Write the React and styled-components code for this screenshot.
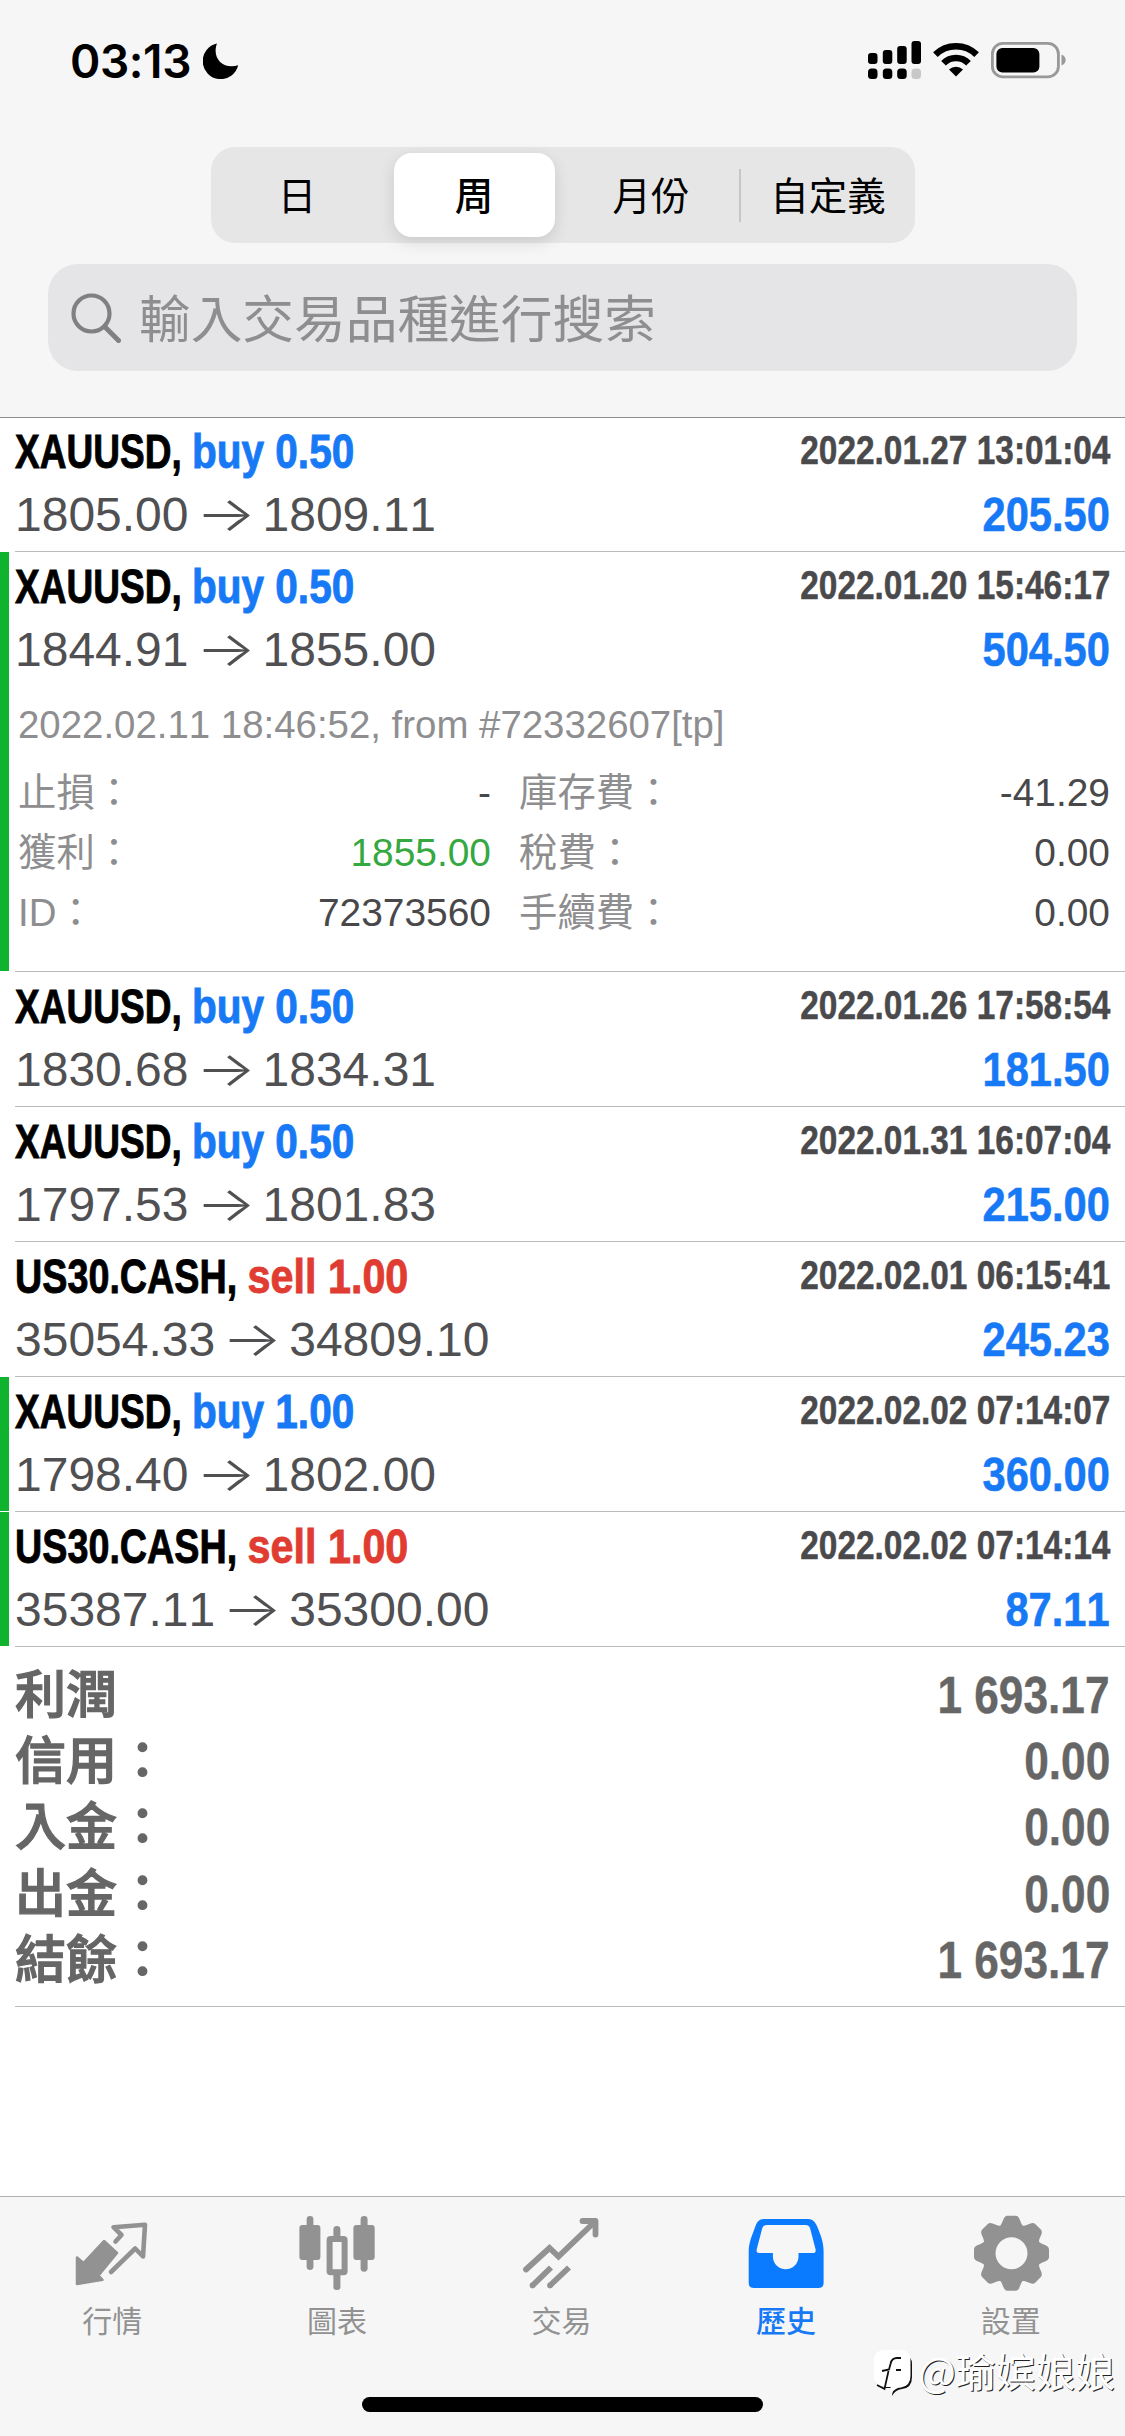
import React from 'react'
import styled, {createGlobalStyle} from 'styled-components'

const sans = '"Liberation Sans", "Noto Sans CJK TC", sans-serif'
const cjk = '"Noto Sans CJK TC", sans-serif'
const inter = 'Inter, "Noto Sans CJK TC", sans-serif'

const GlobalStyle = createGlobalStyle`
    * {
        box-sizing: border-box;
    }
    body {
        margin: 0;
        background: #fff;
    }
`
const Screen = styled.div`
    display: flex;
    flex-direction: column;
    width: 1125px;
    height: 2436px;
    overflow: hidden;
    background: #fff;
    font-family: ${sans};
`
const Header = styled.header`
    position: relative;
    z-index: 1;
    display: flex;
    flex-direction: column;
    align-items: center;
    height: 418px;
    flex: none;
    margin-bottom: -1px;
    background: #f6f6f6;
    border-bottom: 1px solid #8e8e8e;
`
const StatusBar = styled.div`
    display: flex;
    justify-content: space-between;
    width: 100%;
    height: 147px;
    padding: 38px 59px 0 70px;
`
const Clock = styled.div`
    display: flex;
    gap: 12px;
    align-items: flex-start;
    font: 600 46px/46px ${inter};
    letter-spacing: -.4px;
    color: #000;
    svg {
        margin-top: 5px;
    }
`
const StatusIcons = styled.div`
    display: flex;
    gap: 12px;
    align-items: flex-start;
    margin-top: 3px;
`
const Segments = styled.div`
    display: flex;
    flex: none;
    align-items: center;
    justify-content: center;
    width: 704px;
    height: 96px;
    border-radius: 24px;
    background: #e6e6e6;
`
const Segment = styled.div`
    display: flex;
    align-items: center;
    justify-content: center;
    flex: none;
    width: ${props => props.$active ? 161 : 177}px;
    height: 84px;
    margin: 0 ${props => props.$active ? 8 : 0}px;
    padding-bottom: 5px;
    border-radius: 18px;
    font: ${props => props.$active ? 500 : 400} 38.5px/50px ${cjk};
    color: #000;
    background: ${props => props.$active ? '#fff' : 'transparent'};
    box-shadow: ${props => props.$active ? '0 5px 16px rgba(0,0,0,.12)' : 'none'};
`
const Divider = styled.i`
    flex: none;
    width: 2px;
    height: 53px;
    margin: 0 -1px;
    background: #c6c6c8;
`
const SearchField = styled.div`
    display: flex;
    flex: none;
    align-items: center;
    width: 1029px;
    height: 107px;
    margin-top: 21px;
    padding: 0 0 4px 23px;
    border-radius: 30px;
    background: #e5e5e7;
    gap: 18px;
    font: 400 51.7px/60px ${cjk};
    color: #8e8e90;
    svg {
        margin-top: 4px;
    }
`
const Row = styled.article`
    position: relative;
    flex: none;
    height: ${props => props.$open ? 420 : 135}px;
    padding: 6px 15px 0;
    &::after {
        content: '';
        position: absolute;
        left: 15px;
        right: 0;
        bottom: 0;
        height: 1px;
        background: #bbb;
    }
    &::before {
        content: '';
        position: absolute;
        display: ${props => props.$marked ? 'block' : 'none'};
        left: 0;
        top: 0;
        bottom: 1px;
        width: 9px;
        background: #0fb32e;
    }
`
const Line = styled.div`
    display: flex;
    justify-content: space-between;
    align-items: flex-start;
    height: 63px;
    white-space: nowrap;
`
// the bold labels are squeezed to a condensed cut, the stroke keeps them heavy
const Symbol = styled.span`
    font: 700 49px/56px ${sans};
    color: #000;
    transform: scaleX(${props => props.$long ? .77 : .756});
    transform-origin: left;
    -webkit-text-stroke: .9px;
`
const Side = styled.span`
    display: inline-block;
    color: ${props => props.$sell ? '#e03c31' : '#1779f5'};
    transform: scaleX(1.095);
    transform-origin: left;
`
const Time = styled.span`
    font: 700 40px/54px ${sans};
    color: #4a4a4d;
    transform: scaleX(.835);
    transform-origin: right;
    -webkit-text-stroke: .5px;
`
const Price = styled.span`
    font: 400 48px/58px ${sans};
    font-kerning: none;
    color: #505052;
`
const Arrow = styled.span`
    display: inline-flex;
    justify-content: center;
    width: 46px;
    margin: 0 14px;
    font: 300 48px/48px ${inter};
    transform: scaleX(1.32);
`
const Profit = styled.span`
    font: 700 49px/56px ${sans};
    font-kerning: none;
    color: #1779f5;
    transform: scaleX(.85);
    transform-origin: right;
    -webkit-text-stroke: .6px;
`
const Comment = styled.p`
    margin: 18px 0 0 3px;
    font: 400 38.4px/46px ${sans};
    font-kerning: none;
    color: #8e8e90;
`
const Details = styled.dl`
    display: grid;
    grid-template-columns: 473px 1fr;
    column-gap: 28px;
    margin: 15px 0 0 3px;
`
const Detail = styled.div`
    display: flex;
    justify-content: space-between;
    align-items: baseline;
    height: 60px;
    font: 400 38.4px/60px ${sans};
    dt {
        color: #8e8e90;
    }
    dd {
        margin: 0;
        font-size: 38.9px;
        color: ${props => props.$green ? '#35a83f' : '#48484a'};
    }
`
const Summary = styled.section`
    position: relative;
    flex: none;
    height: 360px;
    padding: 16px 15px 0;
    &::after {
        content: '';
        position: absolute;
        left: 15px;
        right: 0;
        bottom: 0;
        height: 1px;
        background: #bbb;
    }
`
const Total = styled.div`
    display: flex;
    justify-content: space-between;
    align-items: baseline;
    height: 66.2px;
    font: 500 51px/66px ${sans};
    color: #666;
    -webkit-text-stroke: 1.3px;
`
const Amount = styled.span`
    font-weight: 700;
    transform: scaleX(.867);
    transform-origin: right;
    -webkit-text-stroke: .4px;
`
const TabBar = styled.nav`
    position: relative;
    display: flex;
    height: 240px;
    flex: none;
    margin-top: auto;
    padding-right: 2px;
    background: #f6f6f6;
    border-top: 1px solid #b2b2b2;
`
const Tab = styled.div`
    display: flex;
    flex-direction: column;
    align-items: center;
    flex: 1;
    padding-top: 17px;
    font: ${props => props.$active ? 500 : 400} 30px/40px ${cjk};
    color: ${props => props.$active ? '#1779f5' : '#929292'};
    svg {
        display: block;
        margin: 0 0 5px 2px;
    }
`
const HomeIndicator = styled.i`
    position: absolute;
    left: 362px;
    bottom: 24px;
    width: 401px;
    height: 15px;
    border-radius: 8px;
    background: #000;
`
const Watermark = styled.div`
    position: absolute;
    right: 10px;
    bottom: 38px;
    display: flex;
    align-items: flex-start;
    gap: 4px;
    font: 400 39.8px/50px "Noto Sans CJK SC", sans-serif;
    color: #fff;
    text-shadow: 1px 1px 0 #222;
    svg {
        margin-top: 5px;
    }
`

const Moon = () => (
    <svg width="36" height="36" viewBox="0 0 36 36">
        <path d="M14 .5A18 18 0 1 0 35.2 22.3C20 27 8.5 15 14 .5Z"/>
    </svg>
)

const Signal = () => (
    <svg width="53" height="38" viewBox="0 0 53 38">
        <rect x="0" y="12" width="9.5" height="11" rx="3"/>
        <rect x="14.8" y="9" width="9.5" height="14" rx="3"/>
        <rect x="29.2" y="5" width="9.5" height="18" rx="3"/>
        <rect x="43.5" y="0" width="9.5" height="23" rx="3"/>
        <rect x="0" y="27.5" width="9.5" height="10.5" rx="3.5"/>
        <rect x="14.8" y="27.5" width="9.5" height="10.5" rx="3.5"/>
        <rect x="29.2" y="27.5" width="9.5" height="10.5" rx="3.5"/>
        <rect x="43.5" y="27.5" width="9.5" height="10.5" rx="3.5" fill="#c8c8c8"/>
    </svg>
)

const Wifi = () => (
    <svg width="46" height="38" viewBox="0 0 46 38">
        <g fill="none" stroke="#000" strokeWidth="6.6">
            <path d="M2.4 13.6A29.5 29.5 0 0 1 43.6 13.6"/>
            <path d="M10.5 22.2A17.6 17.6 0 0 1 35.5 22.2"/>
        </g>
        <path d="M23 35.6L16 28.6A10 10 0 0 1 30 28.6Z"/>
    </svg>
)

const Battery = () => (
    <svg width="75" height="38" viewBox="0 0 75 38">
        <rect x="1.4" y="2.4" width="66" height="33.5" rx="10.5" fill="none" stroke="#999" strokeWidth="2.8"/>
        <rect x="5.4" y="7" width="43" height="24.5" rx="6"/>
        <path d="M70.5 13.5C76 15.5 76 22.5 70.5 24.5Z" fill="#999"/>
    </svg>
)

const SearchIcon = () => (
    <svg width="50" height="50" viewBox="0 0 50 50" fill="none" stroke="#808082" strokeWidth="4.2">
        <circle cx="20.5" cy="20.5" r="18"/>
        <path d="M33.5 33.5L47.5 47.5" strokeWidth="5" strokeLinecap="round"/>
    </svg>
)

const QuotesIcon = () => (
    <svg width="84" height="80" viewBox="0 0 84 80">
        <path d="M33 27L46 39L27.5 61.5L31.5 65.8L6 70V43.5L12.5 49Z" fill="#929292" stroke="#929292" strokeWidth="2.5" strokeLinejoin="round"/>
        <path d="M44.5 27.5L50.5 21L42.5 13.2L74 10.8L72 42.5L64.2 34.5L40 58" fill="none" stroke="#929292" strokeWidth="4.6" strokeLinejoin="round" strokeLinecap="round"/>
    </svg>
)

const ChartIcon = () => (
    <svg width="84" height="80" viewBox="0 0 84 80" fill="#929292">
        <rect x="10.6" y="2" width="6.8" height="54" rx="3.4"/>
        <rect x="3.4" y="11" width="21" height="35" rx="3"/>
        <rect x="64.6" y="2" width="7" height="55.7" rx="3.4"/>
        <rect x="57.4" y="11" width="21.3" height="35" rx="3"/>
        <rect x="37.4" y="12" width="7" height="14" rx="3.4"/>
        <rect x="37.4" y="58" width="7" height="18" rx="3"/>
        <rect x="33.6" y="25" width="15" height="33.3" rx="1" fill="none" stroke="#929292" strokeWidth="6"/>
    </svg>
)

const TradeIcon = () => (
    <svg width="84" height="80" viewBox="0 0 84 80" fill="none" stroke="#929292" strokeWidth="5.8">
        <path d="M6 55.5L29.5 34L38.5 42.5L75 7.5" strokeLinecap="round"/>
        <path d="M62.5 7H75.5V20.5" strokeLinecap="round" strokeLinejoin="round"/>
        <path d="M12.5 71.5L13 71L31 53.5M30 71.5L30.5 71L49 53.5"/>
        <path d="M12.5 71.4V71.5M30 71.4V71.5" strokeLinecap="round"/>
    </svg>
)

const HistoryIcon = () => (
    <svg width="84" height="80" viewBox="0 0 84 80">
        <path
            fill="#0a7aff"
            fillRule="evenodd"
            d="M19 5H63C68 5 70 8 72 12C76 22 78.6 28 78.6 38V69Q78.6 74 73.6 74H8.7Q3.7 74 3.7 69V38C3.7 28 7 22 10.5 12C12 8 14 5 19 5ZM22 11C19.5 11 18 12 17.3 14L11.8 35C11.2 38 11.8 39 14.5 39H27.9V42.5A12.8 12.8 0 0 0 53.5 42.5V39H67.5C70.5 39 71 38 70.5 35L65 14C64.2 12 63 11 60.5 11Z"
        />
    </svg>
)

const SettingsIcon = () => (
    <svg width="84" height="80" viewBox="0 0 84 80">
        <g transform="translate(41.5 39.3)" fill="#929292">
            {[0, 45, 90, 135, 180, 225, 270, 315].map(angle => (
                <path key={angle} transform={`rotate(${angle})`} d="M-13 -26C-8 -29 -9 -37.5 -4 -37.5H4C9 -37.5 8 -29 13 -26Z"/>
            ))}
            <circle r="22.8" fill="none" stroke="#929292" strokeWidth="13.6"/>
        </g>
    </svg>
)

const WatermarkLogo = () => (
    <svg width="40" height="48" viewBox="0 0 40 48">
        <path d="M36 8Q38 10 38 14V27Q38 38 28 39Q21 40 18 46L19 38L12 38Q3 36 1 31" fill="#111"/>
        <path d="M11 0H26Q36.5 0 36.5 11V26Q36.5 36 27 37.5Q20 38 17.5 44L16.5 37H11Q0 37 0 26V11Q0 0 11 0Z" fill="#fff"/>
        <path d="M27 8H23Q17.5 8 16.5 14L15 19.5L8 21M14.5 21L10.5 39L3 35M22 20H27" fill="none" stroke="#111" strokeWidth="1.8"/>
    </svg>
)

const trades = [
    {symbol: 'XAUUSD', side: 'buy', lots: '0.50', open: '1805.00', close: '1809.11', time: '2022.01.27 13:01:04', profit: '205.50'},
    {symbol: 'XAUUSD', side: 'buy', lots: '0.50', open: '1844.91', close: '1855.00', time: '2022.01.20 15:46:17', profit: '504.50', marked: true,
        comment: '2022.02.11 18:46:52, from #72332607[tp]',
        details: [
            ['止損：', '-'], ['庫存費：', '-41.29'],
            ['獲利：', '1855.00', true], ['稅費：', '0.00'],
            ['ID：', '72373560'], ['手續費：', '0.00']
        ]},
    {symbol: 'XAUUSD', side: 'buy', lots: '0.50', open: '1830.68', close: '1834.31', time: '2022.01.26 17:58:54', profit: '181.50'},
    {symbol: 'XAUUSD', side: 'buy', lots: '0.50', open: '1797.53', close: '1801.83', time: '2022.01.31 16:07:04', profit: '215.00'},
    {symbol: 'US30.CASH', side: 'sell', lots: '1.00', open: '35054.33', close: '34809.10', time: '2022.02.01 06:15:41', profit: '245.23'},
    {symbol: 'XAUUSD', side: 'buy', lots: '1.00', open: '1798.40', close: '1802.00', time: '2022.02.02 07:14:07', profit: '360.00', marked: true},
    {symbol: 'US30.CASH', side: 'sell', lots: '1.00', open: '35387.11', close: '35300.00', time: '2022.02.02 07:14:14', profit: '87.11', marked: true}
]

const totals = [
    ['利潤', '1 693.17'],
    ['信用：', '0.00'],
    ['入金：', '0.00'],
    ['出金：', '0.00'],
    ['結餘：', '1 693.17']
]

const Trade = ({trade}) => (
    <Row $open={!!trade.details} $marked={trade.marked}>
        <Line>
            <Symbol $long={trade.symbol.length > 6}>
                {trade.symbol}, <Side $sell={trade.side === 'sell'}>{trade.side} {trade.lots}</Side>
            </Symbol>
            <Time>{trade.time}</Time>
        </Line>
        <Line>
            <Price>{trade.open}<Arrow>→</Arrow>{trade.close}</Price>
            <Profit>{trade.profit}</Profit>
        </Line>
        {trade.comment && <Comment>{trade.comment}</Comment>}
        {trade.details && (
            <Details>
                {trade.details.map(([label, value, green]) => (
                    <Detail key={label} $green={green}><dt>{label}</dt><dd>{value}</dd></Detail>
                ))}
            </Details>
        )}
    </Row>
)

export default function App() {
    return (
        <Screen>
            <GlobalStyle/>
            <Header>
                <StatusBar>
                    <Clock>03:13<Moon/></Clock>
                    <StatusIcons>
                        <Signal/>
                        <Wifi/>
                        <Battery/>
                    </StatusIcons>
                </StatusBar>
                <Segments>
                    <Segment>日</Segment>
                    <Segment $active>周</Segment>
                    <Segment>月份</Segment>
                    <Divider/>
                    <Segment>自定義</Segment>
                </Segments>
                <SearchField><SearchIcon/>輸入交易品種進行搜索</SearchField>
            </Header>
            {trades.map(trade => <Trade key={trade.time} trade={trade}/>)}
            <Summary>
                {totals.map(([label, value]) => (
                    <Total key={label}>{label}<Amount>{value}</Amount></Total>
                ))}
            </Summary>
            <TabBar>
                <Tab><QuotesIcon/>行情</Tab>
                <Tab><ChartIcon/>圖表</Tab>
                <Tab><TradeIcon/>交易</Tab>
                <Tab $active><HistoryIcon/>歷史</Tab>
                <Tab><SettingsIcon/>設置</Tab>
                <HomeIndicator/>
                <Watermark><WatermarkLogo/>@瑜嫔娘娘</Watermark>
            </TabBar>
        </Screen>
    )
}
